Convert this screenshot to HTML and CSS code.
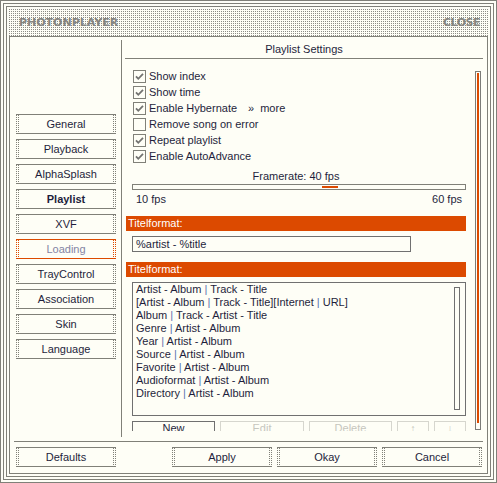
FILE: index.html
```html
<!DOCTYPE html>
<html>
<head>
<meta charset="utf-8">
<link rel="stylesheet" href="styles.css">
</head>
<body>
<div class="win">
 <div class="f2">
  <div class="f3">
   <div class="hdr"><span class="brand">PHOTONPLAYER</span><span class="close">CLOSE</span></div>
   <div class="panel">
    <div class="main">
     <nav class="side">
      <div class="sbtn">General</div>
      <div class="sbtn">Playback</div>
      <div class="sbtn">AlphaSplash</div>
      <div class="sbtn bold">Playlist</div>
      <div class="sbtn">XVF</div>
      <div class="sbtn hot">Loading</div>
      <div class="sbtn">TrayControl</div>
      <div class="sbtn">Association</div>
      <div class="sbtn">Skin</div>
      <div class="sbtn">Language</div>
     </nav>
     <section class="pane">
      <div class="ptitle">Playlist Settings</div>
      <div class="pbody">
       <div class="scroll">
        <div class="checks">
         <div class="row"><svg class="cb" width="13" height="13" viewBox="0 0 13 13"><rect x="0.5" y="0.5" width="12" height="12" fill="#fefef6" stroke="#808078"/><path d="M3 6.3 L5.3 8.8 L10 3.8" fill="none" stroke="#727270" stroke-width="1.8"/></svg><span>Show index</span></div>
         <div class="row"><svg class="cb" width="13" height="13" viewBox="0 0 13 13"><rect x="0.5" y="0.5" width="12" height="12" fill="#fefef6" stroke="#808078"/><path d="M3 6.3 L5.3 8.8 L10 3.8" fill="none" stroke="#727270" stroke-width="1.8"/></svg><span>Show time</span></div>
         <div class="row"><svg class="cb" width="13" height="13" viewBox="0 0 13 13"><rect x="0.5" y="0.5" width="12" height="12" fill="#fefef6" stroke="#808078"/><path d="M3 6.3 L5.3 8.8 L10 3.8" fill="none" stroke="#727270" stroke-width="1.8"/></svg><span>Enable Hybernate</span><span class="more">»<span class="mtxt">more</span></span></div>
         <div class="row"><svg class="cb" width="13" height="13" viewBox="0 0 13 13"><rect x="0.5" y="0.5" width="12" height="12" fill="#fefef6" stroke="#808078"/></svg><span>Remove song on error</span></div>
         <div class="row"><svg class="cb" width="13" height="13" viewBox="0 0 13 13"><rect x="0.5" y="0.5" width="12" height="12" fill="#fefef6" stroke="#808078"/><path d="M3 6.3 L5.3 8.8 L10 3.8" fill="none" stroke="#727270" stroke-width="1.8"/></svg><span>Repeat playlist</span></div>
         <div class="row"><svg class="cb" width="13" height="13" viewBox="0 0 13 13"><rect x="0.5" y="0.5" width="12" height="12" fill="#fefef6" stroke="#808078"/><path d="M3 6.3 L5.3 8.8 L10 3.8" fill="none" stroke="#727270" stroke-width="1.8"/></svg><span>Enable AutoAdvance</span></div>
        </div>
        <div class="frlabel">Framerate: 40 fps</div>
        <div class="slider"><div class="thumb"></div></div>
        <div class="fps"><span>10 fps</span><span>60 fps</span></div>
        <div class="tbar first">Titelformat:</div>
        <div class="input">%artist - %title</div>
        <div class="tbar">Titelformat:</div>
        <div class="list">
         <div class="items">
          <div>Artist - Album <i>|</i> Track - Title</div>
          <div>[Artist - Album <i>|</i> Track - Title][Internet <i>|</i> URL]</div>
          <div>Album <i>|</i> Track - Artist - Title</div>
          <div>Genre <i>|</i> Artist - Album</div>
          <div>Year <i>|</i> Artist - Album</div>
          <div>Source <i>|</i> Artist - Album</div>
          <div>Favorite <i>|</i> Artist - Album</div>
          <div>Audioformat <i>|</i> Artist - Album</div>
          <div>Directory <i>|</i> Artist - Album</div>
         </div>
         <div class="lbar"></div>
        </div>
        <div class="btns">
         <div class="ebtn on w1">New</div>
         <div class="ebtn w2">Edit</div>
         <div class="ebtn w1">Delete</div>
         <div class="ebtn w3">↑</div>
         <div class="ebtn w3">↓</div>
        </div>
       </div>
       <div class="vbar"><div class="vthumb"></div></div>
      </div>
     </section>
    </div>
    <div class="foot">
     <div class="sbtn">Defaults</div>
     <div class="fright">
      <div class="sbtn">Apply</div>
      <div class="sbtn">Okay</div>
      <div class="sbtn">Cancel</div>
     </div>
    </div>
   </div>
  </div>
 </div>
</div>
</body>
</html>
```
FILE: styles.css
```css
html, body {
  margin: 0;
  padding: 0;
  background: #fefef6;
}
body {
  font-family: "Liberation Sans", Arial, sans-serif;
  font-size: 11px;
  color: #1e1e3c;
}
.win {
  width: 497px;
  height: 483px;
  box-sizing: border-box;
  border: 1px solid #808078;
  padding: 2px;
  background: #fefef6;
}
.f2 {
  height: 100%;
  box-sizing: border-box;
  border: 1px solid #808078;
  padding: 2px;
}
.f3 {
  height: 100%;
  box-sizing: border-box;
  border: 1px solid #808078;
  padding: 2px;
  display: flex;
  flex-direction: column;
}
.hdr {
  flex: none;
  height: 27px;
  display: flex;
  align-items: center;
  justify-content: space-between;
  padding: 0 8px 0 10px;
  background-color: #8c8c86;
  background-image:
    linear-gradient(90deg, transparent 1px, #fefef6 1px),
    linear-gradient(transparent 1px, #fefef6 1px);
  background-size: 2px 2px;
  font-family: "DejaVu Sans", Verdana, sans-serif;
  font-weight: bold;
  font-size: 11px;
  color: #858580;
}
.close {
  letter-spacing: -0.5px;
}
.panel {
  flex: 1;
  border: 1px solid #808078;
  display: flex;
  flex-direction: column;
  min-height: 0;
}
.main {
  flex: none;
  height: 397px;
  padding: 3px 4px 0 4px;
  display: flex;
}
.side {
  width: 108px;
  border-right: 1px solid #808078;
  padding: 74px 0 0 2px;
  box-sizing: border-box;
  display: flex;
  flex-direction: column;
  gap: 5px;
}
.sbtn {
  width: 100px;
  height: 20px;
  box-sizing: border-box;
  border-top: 1px solid #808078;
  border-bottom: 1px solid #808078;
  display: flex;
  align-items: center;
  justify-content: center;
  flex: none;
  background-image:
    linear-gradient(transparent 1px, #fefef6 1px),
    linear-gradient(90deg, #808078 1px, transparent 1px, transparent 2px, #808078 2px),
    linear-gradient(transparent 1px, #fefef6 1px),
    linear-gradient(90deg, #808078 1px, transparent 1px, transparent 2px, #808078 2px);
  background-size: 3px 2px, 3px 2px, 3px 2px, 3px 2px;
  background-repeat: repeat-y;
  background-position: 0 0, 0 0, 100% 0, 100% 0;
}
.sbtn.bold {
  font-weight: bold;
}
.sbtn.hot {
  border-color: #dc4a00;
  color: #8484a4;
  background-image:
    linear-gradient(transparent 1px, #fefef6 1px),
    linear-gradient(90deg, #dc4a00 1px, transparent 1px, transparent 2px, #dc4a00 2px),
    linear-gradient(transparent 1px, #fefef6 1px),
    linear-gradient(90deg, #dc4a00 1px, transparent 1px, transparent 2px, #dc4a00 2px);
}
.pane {
  flex: 1;
  display: flex;
  flex-direction: column;
  min-width: 0;
}
.ptitle {
  margin-left: 3px;
  height: 18px;
  line-height: 18px;
  border-bottom: 1px solid #808078;
  text-align: center;
  flex: none;
}
.pbody {
  flex: 1;
  display: flex;
  margin-left: 3px;
  min-height: 0;
}
.scroll {
  margin-left: 1px;
  width: 340px;
  height: 372px;
  overflow: hidden;
  flex: none;
}
.vbar {
  margin: 12px 0 0 9px;
  width: 6px;
  height: 359px;
  box-sizing: border-box;
  border: 1px solid #7c7c78;
  padding: 1px;
  flex: none;
}
.vthumb {
  width: 2px;
  height: 350px;
  background: #dc4a00;
}
.checks {
  padding: 9px 0 0 7px;
}
.row {
  height: 16px;
  display: flex;
  align-items: center;
  gap: 3px;
}
.cb {
  display: block;
  flex: none;
}
.more {
  margin-left: 8px;
}
.mtxt {
  margin-left: 6px;
}
.frlabel {
  margin-top: 5px;
  height: 14px;
  line-height: 14px;
  text-align: center;
}
.slider {
  margin: 1px 0 0 6px;
  width: 334px;
  height: 6px;
  box-sizing: border-box;
  border: 1px solid #808078;
  position: relative;
}
.thumb {
  position: absolute;
  left: 189px;
  top: 1px;
  width: 16px;
  height: 2px;
  background: #dc4a00;
}
.fps {
  margin-top: 2px;
  height: 14px;
  line-height: 14px;
  display: flex;
  justify-content: space-between;
  padding: 0 4px 0 10px;
}
.tbar {
  margin-top: 5px;
  height: 15px;
  line-height: 15px;
  background: #dc4a00;
  color: #ffffff;
  padding-left: 2px;
}
.tbar.first {
  margin-top: 10px;
}
.input {
  margin: 5px 0 0 6px;
  width: 279px;
  height: 16px;
  box-sizing: border-box;
  border: 1px solid #707070;
  padding-left: 3px;
  line-height: 14px;
}
.input + .tbar {
  margin-top: 10px;
}
.list {
  margin: 5px 0 0 6px;
  width: 334px;
  height: 134px;
  box-sizing: border-box;
  border: 1px solid #707070;
  display: flex;
}
.items {
  flex: 1;
  padding-left: 3px;
  line-height: 13px;
}
.items i {
  font-style: normal;
  color: #5a74b0;
}
.lbar {
  margin: 4px 5px 0 0;
  width: 6px;
  height: 123px;
  box-sizing: border-box;
  border: 1px solid #707070;
  flex: none;
}
.btns {
  margin: 5px 0 0 6px;
  display: flex;
  gap: 5px;
}
.ebtn {
  height: 20px;
  box-sizing: border-box;
  border: 1px solid #d6d6ce;
  color: #c6c6be;
  text-align: center;
  line-height: 13px;
  flex: none;
}
.ebtn.on {
  border-color: #707070;
  color: #1e1e3c;
}
.w1 { width: 83px; }
.w2 { width: 84px; }
.w3 { width: 32px; }
.foot {
  flex: none;
  margin: 4px 4px 0 4px;
  border-top: 1px solid #808078;
  padding: 5px 1px 0 2px;
  display: flex;
  justify-content: space-between;
}
.fright {
  display: flex;
  gap: 5px;
}
```
